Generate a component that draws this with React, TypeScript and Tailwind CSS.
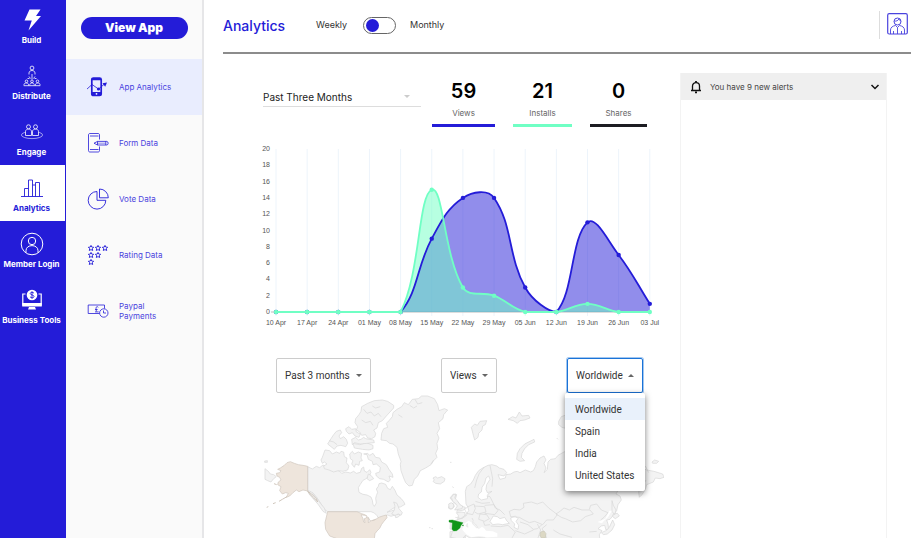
import { useState, type ReactNode } from "react"

const ink = "#241cd8"

function BoltIcon() {
  return (
    <svg width="22" height="24" viewBox="0 0 22 24" fill="#fff">
      <path d="M8.500 1.500h11l-4.500 6.500h5L7.500 22.500l3.300-10H3.500z" />
    </svg>
  )
}

function DistributeIcon() {
  return (
    <svg width="22" height="24" viewBox="0 0 22 24" fill="none" stroke="#fff" strokeWidth=".8">
      <circle cx="11" cy="4" r="1.900" />
      <path d="M8 10.500V9c0-3.300 6-3.300 6 0v1.500M11 10v5.500M8 12.500l1.500 2M14 12.500l-1.500 2M6.500 14.500h2M13.500 14.500h2" />
      <circle cx="5.500" cy="17.300" r="1.300" />
      <circle cx="11" cy="17.300" r="1.300" />
      <circle cx="16.500" cy="17.300" r="1.300" />
      <path d="M3 21.500v-1c0-2 4.500-2 4.500 0v1M8.800 21.500v-1c0-2 4.400-2 4.400 0v1M14.500 21.500v-1c0-2 4.500-2 4.500 0v1M2.800 21.700h16.400" />
    </svg>
  )
}

function EngageIcon() {
  return (
    <svg width="24" height="24" viewBox="0 0 24 24" fill="none" stroke="#fff" strokeWidth=".8">
      <ellipse cx="12" cy="15" rx="10.600" ry="3.600" opacity=".7" />
      <g fill={ink}>
        <path d="M5.500 15.500v-4c0-3.200 6-3.200 6 0v4zM12.500 15.500v-4c0-3.200 6-3.200 6 0v4z" />
        <circle cx="8.500" cy="6.800" r="2" />
        <circle cx="15.500" cy="6.800" r="2" />
      </g>
    </svg>
  )
}

function BarsIcon() {
  return (
    <svg width="22" height="24" viewBox="0 0 22 24" fill="none" stroke={ink} strokeWidth=".9">
      <path d="M0 20.500h22M3.500 20.500v-8h4M7.500 20.500V4h4v16.500M11.500 9h3M14.500 20.500V6.500h4v14" />
    </svg>
  )
}

function MemberIcon() {
  return (
    <svg width="24" height="24" viewBox="0 0 24 24" fill="none" stroke="#fff" strokeWidth="1">
      <circle cx="12" cy="12" r="10.800" />
      <circle cx="12" cy="9" r="3.700" />
      <path d="M6 20.500v-2c0-6.500 12-6.500 12 0v2" />
    </svg>
  )
}

function ToolsIcon() {
  return (
    <svg width="22" height="24" viewBox="0 0 22 24" fill="none">
      <path d="M4.500 6H1.800v11h18.400V6h-2.700" stroke="#fff" strokeWidth="1.200" />
      <path d="M1.200 15h19.600v3.500H1.200zM8 19h6l1 2.500H7z" fill="#fff" />
      <circle cx="11" cy="7" r="5.300" fill="#fff" />
      <path d="M13 5.300c-.7-1.400-3.800-1.300-3.800.2 0 1.700 3.800 1.100 3.800 3 0 1.700-3.200 1.700-4 .2M11 3.300v7.400" stroke={ink} strokeWidth=".9" />
    </svg>
  )
}

function PhoneChartIcon() {
  return (
    <svg width="22" height="22" viewBox="0 0 22 22" fill="none">
      <rect x="4.800" y="2" width="9.400" height="17.500" rx="1.600" stroke={ink} strokeWidth="1.700" />
      <path d="M4.500 16h10v2.500a1 1 0 0 1-1 1h-8a1 1 0 0 1-1-1zM5 2h9v2.200H5z" fill={ink} />
      <circle cx="9.500" cy="17.800" r=".9" fill="#fff" />
      <path d="M-.5 13.500L5 8.500l6.500 4.500 6-5" stroke={ink} strokeWidth=".8" />
      <circle cx="11.500" cy="13" r="1.600" fill={ink} />
      <path d="M15.500 7.300l4.500-.8-1.800 4.200z" fill={ink} />
    </svg>
  )
}

function FormIcon() {
  return (
    <svg width="22" height="22" viewBox="0 0 22 22" fill="none" stroke={ink} strokeWidth=".8">
      <path d="M12.500 7.500V3c0-1-.5-1.500-1.500-1.500H3c-1 0-1.500.500-1.500 1.500v15.500c0 1 .5 1.500 1.500 1.500h8c1 0 1.500-.5 1.500-1.500v-4M3 4h8.500M3 17.500h8.500" />
      <path d="M7 11.200l3.500-1.800h9.300c1.800 0 1.800 3.600 0 3.600h-9.300zM10.500 9.400V13M18.800 9.400V13" />
      <path d="M10.500 11.200h8" strokeWidth=".5" />
    </svg>
  )
}

function PieIcon() {
  return (
    <svg width="22" height="22" viewBox="0 0 22 22" fill="none" stroke={ink} strokeWidth=".9">
      <path d="M10 3.500a8.800 8.800 0 1 0 8.800 8.800H10z" />
      <path d="M12.500 1v8.800h8.800A8.800 8.800 0 0 0 12.500 1z" />
    </svg>
  )
}

function StarsIcon() {
  const spots = [[4, 4], [11, 4], [18, 4], [4, 11], [11, 11], [4, 18]]
  return (
    <svg width="22" height="22" viewBox="0 0 22 22" fill="none" stroke={ink} strokeWidth=".9">
      {spots.map(([x, y]) => (
        <path
          key={`${x}-${y}`}
          transform={`translate(${x} ${y})`}
          d="M0-2.600l.8 1.700 1.900.200-1.400 1.300.4 1.900L0 1.600l-1.700.9.4-1.900-1.400-1.300 1.900-.2z"
        />
      ))}
    </svg>
  )
}

function MoneyIcon() {
  return (
    <svg width="22" height="22" viewBox="0 0 22 22" fill="none" stroke={ink} strokeWidth=".8">
      <path d="M12.500 13.500H1.200V5h16.300v3.500" />
      <path d="M11.300 7.300c-.5-1-2.600-.8-2.300 1l.3 2.700c0 .5-.4.900-.8.900h3.200M8 9.500h2.600" />
      <circle cx="16.800" cy="13" r="4.200" />
      <path d="M16.500 10.500V13h2.500" />
    </svg>
  )
}

function Caret({ up = false, color = "#666" }: { up?: boolean; color?: string }) {
  return (
    <svg width="6" height="3" viewBox="0 0 6 3" fill={color} className="shrink-0">
      <path d={up ? "M0 3h6L3 0z" : "M0 0h6L3 3z"} />
    </svg>
  )
}

const mainNav = [
  { label: "Build", icon: <BoltIcon /> },
  { label: "Distribute", icon: <DistributeIcon /> },
  { label: "Engage", icon: <EngageIcon /> },
  { label: "Analytics", icon: <BarsIcon /> },
  { label: "Member Login", icon: <MemberIcon /> },
  { label: "Business Tools", icon: <ToolsIcon /> },
]

const subNav = [
  { label: "App Analytics", icon: <PhoneChartIcon /> },
  { label: "Form Data", icon: <FormIcon /> },
  { label: "Vote Data", icon: <PieIcon /> },
  { label: "Rating Data", icon: <StarsIcon /> },
  { label: "Paypal Payments", icon: <MoneyIcon /> },
]

function Sidebar() {
  return (
    <nav aria-label="Main" className="w-[66px] shrink-0 bg-[#241cd8] pr-px">
      {mainNav.map((item, i) => (
        <a
          key={item.label}
          href="#"
          className={`flex flex-col items-center justify-end pr-0.5 pb-[5px] text-[8px] leading-4 font-bold whitespace-nowrap ${
            i === 0 ? "h-[53px]" : "h-14"
          } ${item.label === "Analytics" ? "bg-white text-[#241cd8]" : "text-white"}`}
        >
          {item.icon}
          {item.label}
        </a>
      ))}
    </nav>
  )
}

function SubNav() {
  return (
    <nav aria-label="Analytics" className="w-[138px] shrink-0 border-r-2 border-[#e6e6e8] bg-[#fafafa]">
      <div className="flex h-[59px] items-start justify-center pt-[17px]">
        <button className="h-[22px] w-[107px] rounded-full bg-[#241cd8] text-[12px] leading-4 font-black text-white">
          View App
        </button>
      </div>
      {subNav.map((item, i) => (
        <a
          key={item.label}
          href="#"
          className={`flex h-14 items-center gap-[10px] pl-[21px] text-[8px] leading-[10px] text-[#4a43de] ${
            i === 0 ? "bg-[#e9edfe]" : ""
          }`}
        >
          {item.icon}
          <span className={item.label === "Paypal Payments" ? "w-12" : ""}>{item.label}</span>
        </a>
      ))}
    </nav>
  )
}

function Header() {
  return (
    <header className="flex h-[54px] items-center border-b-2 border-[#8c8c8c] pb-[2px] text-[9px] text-[#333]">
      <h1 className="w-[93px] text-[14px] font-medium text-[#241cd8]">Analytics</h1>
      <label className="flex items-center">
        <span className="w-[47px]">Weekly</span>
        <input type="checkbox" role="switch" className="peer sr-only" />
        <span className="flex h-[17px] w-[33px] items-center rounded-full border border-[#666] px-[2px] peer-checked:justify-end">
          <span className="size-[13px] rounded-full bg-[#241cd8]" />
        </span>
        <span className="ml-[14px]">Monthly</span>
      </label>
      <div className="ml-auto flex h-7 items-center border-l border-[#ddd] pr-[3px] pl-[7px]">
        <button aria-label="Profile" className="pb-0.5">
          <svg width="21" height="22" viewBox="0 0 21 22" fill="none" stroke="#4a43de" strokeWidth="1">
            <rect x=".7" y=".7" width="19.600" height="20.300" rx="1.500" strokeWidth="1.200" />
            <circle cx="10.500" cy="8.500" r="3.500" />
            <path d="M7 8c2.500.5 4-.5 5-2 .5 1.500 1 1.800 2 2M3.500 21v-4c0-2.500 2-4 5-4.500l2 2 2-2c3 .5 5 2 5 4.500v4M10.500 14.500V21M6.500 18v3M14.500 18v3" strokeWidth=".9" />
          </svg>
        </button>
      </div>
    </header>
  )
}

const stats = [
  { value: 59, label: "Views", box: "w-[63px] border-[#241cd8]" },
  { value: 21, label: "Installs", box: "w-[59px] border-[#70ffc4]" },
  { value: 0, label: "Shares", box: "w-[57px] border-[#1d1d22]" },
]

function Summary() {
  return (
    <div className="flex items-start pr-[17px] pl-[11px]">
      <div className="mt-3 flex h-[20px] flex-1 items-center border-b border-[#ddd] pr-[11px]">
        <select
          aria-label="Period"
          className="flex-1 appearance-none bg-transparent text-[10px] leading-4 text-[#222] outline-none"
        >
          <option>Past Three Months</option>
        </select>
        <Caret color="#ccc" />
      </div>
      <div className="ml-[11px] flex gap-[18px]">
        {stats.map((s) => (
          <div key={s.label} className={`h-[52px] border-b-[3px] pt-1 text-center ${s.box}`}>
            <div className="text-[20px] leading-6 font-semibold text-black">{s.value}</div>
            <div className="text-[8px] leading-5 text-[#666]">{s.label}</div>
          </div>
        ))}
      </div>
    </div>
  )
}

const weeks = [
  "10 Apr", "17 Apr", "24 Apr", "01 May", "08 May", "15 May", "22 May",
  "29 May", "05 Jun", "12 Jun", "19 Jun", "26 Jun", "03 Jul",
]
const views = [0, 0, 0, 0, 0, 9, 14, 14, 3, 0, 11, 7, 1]
const installs = [0, 0, 0, 0, 0, 15, 3, 2, 0, 0, 1, 0, 0]

const px = (i: number) => 24 + i * 31.15
const py = (v: number) => 172 - v * 8.15

// cubic spline with 0.4 tension, control points kept above the axis
function curve(values: number[]) {
  const pts = values.map((v, i) => ({ x: px(i), y: py(v) }))
  const ctrl = pts.map((p, i) => {
    const prev = pts[i - 1] ?? p
    const next = pts[i + 1] ?? p
    const d1 = Math.hypot(p.x - prev.x, p.y - prev.y)
    const d2 = Math.hypot(next.x - p.x, next.y - p.y)
    const a = (0.4 * d1) / (d1 + d2)
    const b = (0.4 * d2) / (d1 + d2)
    const dx = next.x - prev.x
    const dy = next.y - prev.y
    const cap = (y: number) => Math.min(172, Math.max(9, y))
    return { ax: p.x - a * dx, ay: cap(p.y - a * dy), bx: p.x + b * dx, by: cap(p.y + b * dy) }
  })
  return pts
    .map((p, i) =>
      i === 0
        ? `M${p.x} ${p.y}`
        : `C${ctrl[i - 1].bx} ${ctrl[i - 1].by} ${ctrl[i].ax} ${ctrl[i].ay} ${p.x} ${p.y}`,
    )
    .join("")
}

function Series({ values, color }: { values: number[]; color: string }) {
  return (
    <g>
      <path d={curve(values)} fill="none" stroke={color} strokeWidth="1.800" />
      {values.map((v, i) => (
        <circle key={i} cx={px(i)} cy={py(v)} r="2.200" fill={color} />
      ))}
    </g>
  )
}

function WeeklyChart() {
  const close = `L${px(12)} 172L24 172Z`
  return (
    <svg
      viewBox="0 0 412 190"
      className="mt-[13px] w-full font-['Liberation_Sans',sans-serif] text-[7px]"
      role="img"
      aria-label="Views and installs by week"
    >
      {weeks.map((w, i) => (
        <g key={w}>
          <path d={`M${px(i)} 9V176`} stroke="#edf4fb" />
          <text x={px(i)} y="185" textAnchor="middle" fill="#555">
            {w}
          </text>
        </g>
      ))}
      {Array.from({ length: 11 }, (_, i) => i * 2).map((v) => (
        <text key={v} x="18" y={py(v) + 2} textAnchor="end" fill="#555">
          {v}
        </text>
      ))}
      <path d="M19 172H398" stroke="#bbb" />
      <path d={curve(views) + close} fill="#241cd8" fillOpacity=".5" />
      <path d={curve(installs) + close} fill="#70ffc4" fillOpacity=".5" />
      <Series values={views} color="#241cd8" />
      <Series values={installs} color="#70ffc4" />
    </svg>
  )
}

const regions = ["Worldwide", "Spain", "India", "United States"]

function FilterSelect({ label, value, width }: { label: string; value: string; width: string }) {
  return (
    <div className={`flex h-[35px] items-center rounded-[2px] border border-[#ccc] pr-2 pl-2 ${width}`}>
      <select
        aria-label={label}
        className="min-w-0 flex-1 appearance-none bg-transparent leading-4 outline-none"
      >
        <option>{value}</option>
      </select>
      <Caret />
    </div>
  )
}

function Filters() {
  const [open, setOpen] = useState(true)
  const [region, setRegion] = useState("Worldwide")
  return (
    <div className="mt-7 flex justify-between pr-[21px] pl-6 font-[Roboto,sans-serif] text-[10px] text-[#333]">
      <FilterSelect label="Date range" value="Past 3 months" width="w-[95px]" />
      <FilterSelect label="Metric" value="Views" width="w-[56px]" />
      <div className="relative">
        <button
          aria-haspopup="listbox"
          aria-expanded={open}
          onClick={() => setOpen(!open)}
          className="flex h-[35px] w-[76px] items-center justify-between rounded-[2px] border border-[#1a73d8] px-2 ring-1 ring-[#1a73d8]/40"
        >
          {region}
          <Caret up={open} />
        </button>
        {open && (
          <ul
            role="listbox"
            aria-label="Region"
            className="absolute top-full -right-[2px] z-10 w-20 rounded-[2px] bg-white py-[5px] shadow-[0_2px_6px_rgba(0,0,0,0.5)]"
          >
            {regions.map((r) => (
              <li key={r} role="option" aria-selected={r === region}>
                <button
                  onClick={() => {
                    setRegion(r)
                    setOpen(false)
                  }}
                  className={`block h-[22px] w-full pl-[10px] text-left whitespace-nowrap ${
                    r === region ? "bg-[#e9f1fb]" : ""
                  }`}
                >
                  {r}
                </button>
              </li>
            ))}
          </ul>
        )}
      </div>
    </div>
  )
}

function Land({ children }: { children: ReactNode }) {
  return (
    <g fill="#f3f3f3" stroke="#d6d6d6" strokeWidth="2" strokeLinejoin="round">
      {children}
    </g>
  )
}

function WorldMap() {
  return (
    <svg viewBox="0 0 412 145" className="block w-full" role="img" aria-label="Views by country">
      {/* Americas and Greenland */}
      <g transform="translate(3 -43) scale(.33333)">
        <Land>
          <path d="M158 350l14 7 12-8 10 4 10-8 14 8 12-2 14 9 10 4 6 6 12-4 14 3 10-5 8 6 12-3 4-12 6-4 2 12 8 4 8-8 4 8-6 12-10 8-8 4-8 12-6 10 2 14 12 6 12 2 12 6 4 10 2 12 4 6 6-10-2-14 2-8 4-10-4-10 6-8 2-8 8-2 12 4 6 12 8 4 6-10 8 12 6 14 12 10 8 10 4 8-14 8-18 2-10 6-12 8 12-4 14-4-2 8 8 6 12-4-10 12-8 2-2-8-12 4-10-4-18 10-8 2-6-10-8-8-10-4H218l-12-8-8-16-12-18-12-14-16-4z" />
          <path d="M416 456l10 4 6 16 10 12-4 8-8-4-10 4-10-4 8-12 2-12z" />
          <path d="M210 300l14 2 8 10 12-6 10 4 4-6 8 2 2 14 8 4-2 14 8 10-4 12-14 4-14-2-14 4-14-6-14-4-2-8 10-6-8-6-6 4-4-10 4-8z" />
          <path d="M284 312l8-8 6 8 12-6 10 4-2 14 4 8-8 2-2 12-10-4-4 10-8-10 4-10-8-6z" />
          <path d="M326 312l12-2 6 6 10-6 8 12 12 2 6 12 14 8 8 14 10 14 2 10-12-4 4 12-6 6-14-8-12-2-10-8-2-8 12-4 2-14-12-10-10 2-2-10-12-6-4-14z" />
          <path d="M294 280l20 4 20-6 20 8v10l-12 4-20-2-24-4z" />
          <path d="M302 206l10-12 6-10 2-14 18-10 20-8 24-2 16 4 18 12v8l-22 24-12 14-12 6-4 16-10 6 6 10-2 10-10 6-12-2-6-10-12 2-6-10-10-6 4-10-8-12z" />
          <path d="M228 266l8-12 8-10 12-4 4 8-8 10 4 8 10-6 8 8 4 12-6 10-14-4-12 2-8 10-10-8-10-8zM272 236l10-6 8 8 12-2 2 10 12 6-4 10-12-4-8-10-10 4-8-8zM290 268l12-6 8 8 8-2 8-6 6 4 24 4 2 8-22 2-20 2-18-4-6 6z" />
          <path d="M380 250l6-14 12-4-4-12 8-8 10-12 2-12 12-10 14-8 8-12 12 6 12-16 18-2 10-8 18 0 20 8 10 18 4 18 16-6 10 4-12 14-2 12-14 12 4 18-8 14 6 14-6 16 2 16-6 14 4 12-10 10-8 12-16 10-16 8-8 16-10 10-6 18-10 2-10-10-6-14-8-22-2-18 2-10-8-22-4-20-12-10-10-2-10-8-16-2z" />
          <path d="M534 384l8-4 6 4 12-4 10 6-2 8-12 8-14-2-8-6 4-4z" />
          <path d="M30 356l10 8 6 8 10 2 8 6-8 6-8 10-10-4-8-4zM29 333l8-1v5h-8z" />
          <path d="M160 422l10 4 12 14 14 20 12 14 6 16-10-6-14-20-12-14-16-18zM340 372l8 4 8 10-12 6-8-6z" />
          <path d="M585 444l10-12 10 2-4 14 8 8 8 12 14 4-4 8-22 4 8-12-6-8-8-4zM584 462l10-2 4 10-10 8-8-4zM585 545l24-2 22-4v25h-46z" />
          <path d="M604 488l14-2 12 2v24l-22-2 2-14zM586 514l6 0-1 24-6-1z" />
          <path d="M586 337h3M593 410l2 3M523 533h3M530 536h3" strokeWidth="3" />
          <path d="M326 178l10 12 12-4 10 12 12-8 8 10M320 210l12 8 14-4 8 12M430 194l12 8M464 166l12 8 10-6M480 148l8 14 14-4M536 330l-8 12M222 272l14 4 10 8M352 168l10 6 14-4" fill="none" />
        </Land>
        <g fill="#eee5dc" stroke="#cfc6bc" strokeWidth="2" strokeLinejoin="round">
          <path d="M76 354l12-8 8-8 10-3 12 5 12 4 14 2 14 3v74l-14-3-12 5-8-5-10 8-10 10-10 4 6-12-8-2-10 4-8-10 4-12-10-6 2-8 8-6-4-8-8-4-2-8 10-2 4-6-10-4z" />
          <path d="M96 440l-14 8-10 6M62 458l-8 3M40 470l-5 2M158 424l12 8 14 14 4 10-12-12-14-14zM57 401l8 3" fill="none" strokeWidth="3" />
          <path d="M218 485H306l14 6 12 4 6 8 8 10 14-4 14-8 12-4 8-2 2 8-10 12-6 8-6 12-8 8-6 8-2 15H246l-22-8-12-20-2-20z" />
        </g>
        <path d="M318 494l10 2 8 2-2 6-6 2 2 12-4-2-2-10zM340 502l6 12-6 4zM352 512l10-4" fill="#fff" stroke="#cfc6bc" strokeWidth="2" />
      </g>

      {/* Europe and Asia */}
      <g transform="translate(188 -43) scale(.33333)">
        <Land>
          <path d="M76 424l4-14 12-8 8-12 6-14 10-14 12-8 16-8 12-2 14 4 8 6 14 4 8 10-8 10-18-4 6 14 16-4 2-10 14-2 10-6 10-2 8 4 16-8 16 6 8-4 6-12 4-14 10-12 12-6 6 12-6 10 6 14-6 14 10-10 2-22 8-8 14-2 8-10 18-10 20-8 28-8 60 10 60 20 56 30 24 10 22 4 26 8 4 10-12 4-14-2-6 12-20 8-4 14-10 16-8 8-2-16 10-20 12-14-18-2-18 8-30 6-14 10-10 18 12 6 4 12-10 14-4 18-12 16-8 10-10 2 4 12 2 16-8 2-4-14-10 2-10 8 12 6-8 12 2 18H150l-20-10-40 2-14-8-12 14-12-4-20-4 8-26 12-4 2-12-10-8 18-6 16-12 8-12-2-10-6-10z" />
          <path d="M230 328l2-18 8-14 14-14 16-8 12-6 2 8-18 8-12 12-8 14-2 12 10 10-14 2zM94 232l10-10 8 4 8-12 20-2-4 12-8 4-2 12-10 10-2 12-10 8-4-14zM204 208l14-8 10 4 10-18 8 12 20-2 4 8-16 6-14 2-8 8-12-8zM356 214l8-14 16-6v42l-14-4-10-8zM350 264l4 4" />
          <path d="M636 336l8-6 12 4-6 6h-12zM516 452l4 14 8 14-4 14-8-10zM520 492l12-2 6 8-12 8-8-6zM518 510l6 14-8 16-14 12-12 2-6-6 14-6 10-10z" />
          <path d="M34 442l6-8 8-2-4 12 8 8 8 12 8 4-2 8-22 4 8-12-6-8-8-6zM26 462l8-4 8 6-4 12-10 0z" />
        </Land>
        <g fill="#fff" stroke="#d6d6d6" strokeWidth="2" strokeLinejoin="round">
          <path d="M116 432l8-6 2-14 8-12 4-16 8-6 4 10-10 16-2 14 4 10 14-4-12 8-2 14-18 4-10-8z" />
          <path d="M66 538l8-18 12-8 10 6 12 12 8 8 10-8 6 4 6 8 20 2 14 6 0 10-30 2-26-4-22 4-16-10z" stroke="none" />
          <path d="M150 514l10-16 12 2 8 6 14-4 6 10 8 8-20 4-14-2-16 2zM212 504l14-6 8 8-6 8 8 12-2 12-12-6 2-10-10-10z" />
          <path d="M472 516l14 4 6-8 12-10 12-20-8 0-12 24-14 6z" stroke="none" />
        </g>
        <g fill="none" stroke="#d6d6d6" strokeWidth="2" strokeLinejoin="round">
          <path d="M150 346l4 20 4 20-2 24M132 352l-14 18-8 20-6 24M140 438l10 2 8 16 8 18 14 6 14 14M106 454l20 6 24-2M84 470l18-8 4 14-8 18-18-4-6-12zM102 468l32 2 4 16-24 6-10-6M134 466l28-2 12 18-10 12-30-4M120 492l20 2 8 12-14 8-18-6zM130 514l4 12 16-2M46 502l20 4 16-12" />
          <path d="M212 500l-4-16 14-6 18 2 12-8-2-12 24-4 18 6 16-6 18 18 16 12 10 8-12 16-20 0-12 14-24-10-16 4-16-8-14-8zM348 492l12-8 12-10 16 6 14-8 24 8 24 0 10 12-24 8-14 12-24 4-22-10-12-4zM448 478l4-12 18-4 14 18 20 8-12 14-10 8M240 516l24 8 16 14 12-2 14-12M292 522l10 18-8 24M152 528l30 2 22-4 22 20-10 18M226 542l28 10 26-12M320 524l-14 12 14 28M340 540l20 12 36 10" />
          <path d="M448 546l22-2M616 348l10 20M96 504l4 8" />
        </g>
        <path d="M302 546l10-3 6 8-2 13h-12l-4-8z" fill="#dcd8c4" stroke="#c9c7b8" strokeWidth="2" />
        <path d="M27 511l10-1 20 5 12 3-7 10-2 6-10 8-9 1-5-5 1-20-10-2zM66 526l4-1v3z" fill="#109618" stroke="#109618" />
        <path d="M78 528l4-8 2 12zM98 514l8 8 8 10-4 2-12-12z" fill="#f3f3f3" stroke="#d6d6d6" />
      </g>
    </svg>
  )
}

function Alerts() {
  return (
    <aside className="mt-[19px] mr-6 w-[207px] shrink-0 border-x border-[#f3f3f3]">
      <button className="flex h-[27px] w-full items-center bg-[#efefef] pr-[6px] pl-[9px] text-[8px] text-[#444]">
        <svg width="12" height="14" viewBox="0 0 12 14" fill="none" stroke="#111" strokeWidth="1.300">
          <path d="M1 10.500h10M2.500 10V6c0-4.500 7-4.500 7 0v4" />
          <path d="M6 1v1.500M5 12.300h2" strokeWidth="1.800" />
        </svg>
        <span className="ml-2">You have 9 new alerts</span>
        <svg width="10" height="6" viewBox="0 0 10 6" fill="none" stroke="#111" strokeWidth="1.500" className="ml-auto">
          <path d="M1.500 1L5 4.500 8.500 1" />
        </svg>
      </button>
    </aside>
  )
}

export default function App() {
  return (
    <div className="flex min-h-screen bg-white font-[Inter,sans-serif]">
      <Sidebar />
      <SubNav />
      <main className="flex min-w-0 flex-1 flex-col pr-[9px] pl-[19px]">
        <Header />
        <div className="flex flex-1">
          <section className="min-w-0 flex-1 pt-[21px] pr-4 pl-[29px]">
            <Summary />
            <WeeklyChart />
            <Filters />
            <WorldMap />
          </section>
          <Alerts />
        </div>
      </main>
    </div>
  )
}
